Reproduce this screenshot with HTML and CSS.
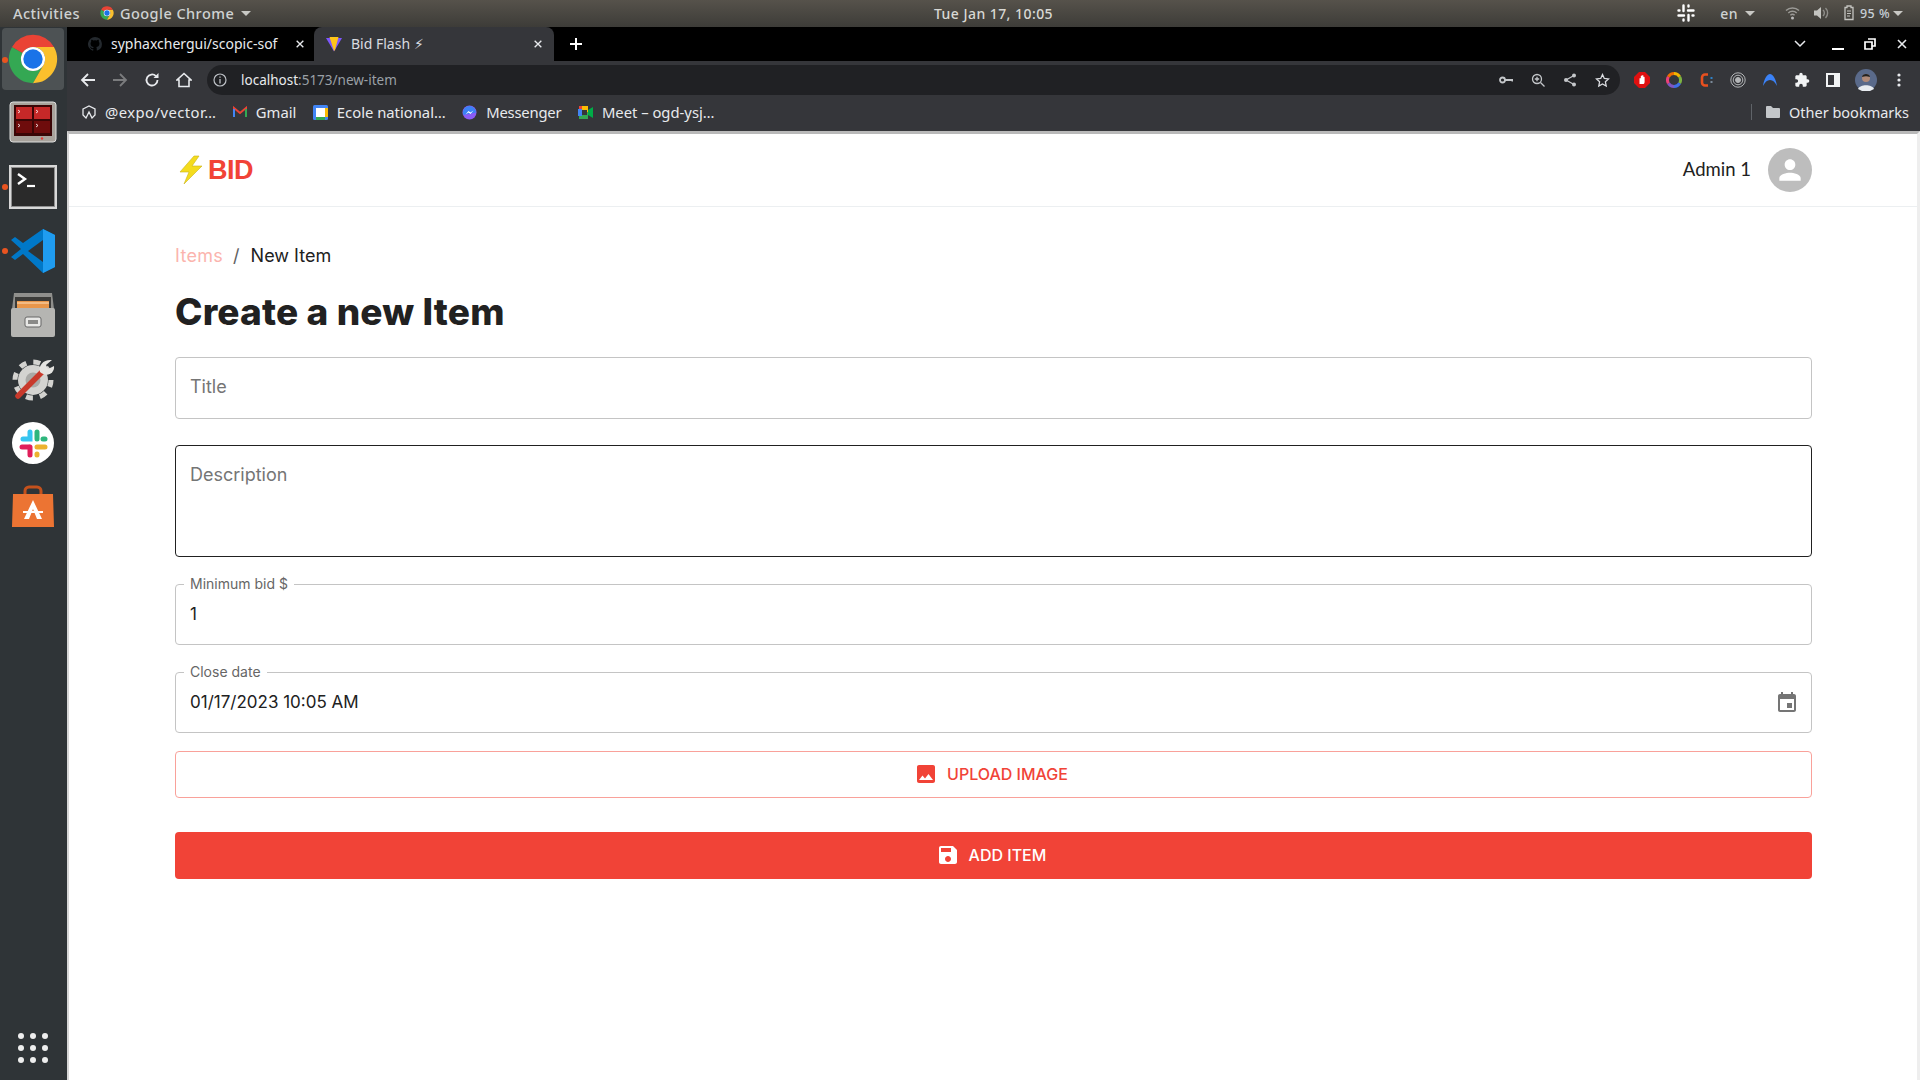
FILE: index.html
```html
<!DOCTYPE html>
<html>
<head>
  <title>Bid Flash</title>
  <meta charset="UTF-8">
  <link rel="stylesheet" href="styles.css">
</head>
<body>
  <svg class="defs" width="0" height="0">
    <symbol id="chrome" viewBox="0 0 48 48">
      <path fill="#34a853" d="M6.68 14A20 20 0 0 0 24 44l8.66-15A10 10 0 0 1 15.34 19z"/>
      <path fill="#fbc02d" d="M41.32 14A20 20 0 0 1 24 44l8.66-15A10 10 0 0 0 24 14z"/>
      <path fill="#ea4335" d="M24 4a20 20 0 0 1 17.32 10H24a10 10 0 0 0-8.66 5L6.68 14A20 20 0 0 1 24 4z"/>
      <circle cx="24" cy="24" r="10" fill="#fff"/>
      <circle cx="24" cy="24" r="8" fill="#1a73e8"/>
    </symbol>
    <symbol id="close" viewBox="0 0 12 12">
      <path d="M2 2l8 8M10 2l-8 8" stroke="currentColor" stroke-width="1.6" fill="none"/>
    </symbol>
  </svg>

  <!-- gnome top bar -->
  <div class="topbar">
    <div class="topbar-left">
      <span class="activities">Activities</span>
      <svg class="app-icon" width="16" height="16"><use href="#chrome"/></svg>
      <span class="appname">Google Chrome</span>
      <span class="caret"></span>
    </div>
    <div class="clock">Tue Jan 17, 10:05</div>
    <div class="topbar-right">
      <svg width="20" height="20" viewBox="0 0 20 20" class="tray-slack" fill="none" stroke="#fff" stroke-width="2.4" stroke-linecap="round"><path d="M7.500 2.500v5.500M12.500 12v5.500M2.500 12.500H8M12 7.500h5.500M12.500 2.500v1M7.500 16.500v1M2.500 7.500h1M16.500 12.500h1"/></svg>
      <span class="lang">en</span><span class="caret"></span>
      <svg class="tray-wifi" width="15" height="14" viewBox="0 0 15 14"><path d="M1 4.500a9.500 9.500 0 0 1 13 0M3.300 7a6.200 6.200 0 0 1 8.400 0M5.400 9.300a3 3 0 0 1 4.200 0" stroke="#9b9a96" stroke-width="1.500" fill="none"/><circle cx="7.500" cy="12" r="1.500" fill="#bbb"/></svg>
      <svg class="tray-vol" width="16" height="14" viewBox="0 0 16 14"><path d="M1 4.500h3L8 1v12L4 9.500H1z" fill="#c4c4c0"/><path d="M10 4a4 4 0 0 1 0 6M12.500 2a7 7 0 0 1 0 10" stroke="#8f8e8a" stroke-width="1.400" fill="none"/></svg>
      <svg class="tray-batt" width="16" height="16" viewBox="0 0 16 16"><path d="M3 2.500h2V1h4v1.500h2v12H3z" fill="none" stroke="#c4c4c0" stroke-width="1.300"/><path d="M5 6h4M5 8.500h4M5 11h3" stroke="#c4c4c0" stroke-width="1.200"/></svg>
      <span class="batt">95 %</span><span class="caret caret-batt"></span>
    </div>
  </div>

  <div class="desktop">
    <!-- dock -->
    <nav class="dock">
      <div class="dock-item active">
        <span class="dot"></span>
        <svg width="58" height="58"><use href="#chrome"/></svg>
      </div>
      <div class="dock-item">
        <svg width="48" height="44" viewBox="0 0 48 44">
          <rect x="1" y="1" width="46" height="40" rx="3" fill="#a8a39c" stroke="#ddd"/>
          <rect x="5" y="4" width="38" height="31" fill="#3a0606"/>
          <rect x="7" y="6" width="16" height="12" fill="#c62828"/><rect x="25" y="6" width="16" height="12" fill="#c62828"/>
          <rect x="7" y="20" width="16" height="12" fill="#6e0c0c"/><rect x="25" y="20" width="16" height="12" fill="#6e0c0c"/>
          <path d="M9 9l2 1.500-2 1.500M27 9l2 1.500-2 1.500M9 23l2 1.500-2 1.500M27 23l2 1.500-2 1.500" stroke="#fff" fill="none" stroke-width=".8"/>
          <circle cx="33" cy="37.500" r="1.200" fill="#e53935"/>
        </svg>
      </div>
      <div class="dock-item">
        <span class="dot"></span>
        <svg width="48" height="44" viewBox="0 0 48 44">
          <rect x="0" y="0" width="48" height="44" fill="#d8d8d8"/>
          <rect x="2" y="2" width="44" height="40" fill="#8f8f8f"/>
          <rect x="3" y="3" width="42" height="38" fill="#2a2a2a"/>
          <path d="M9 9l7 5-7 5" stroke="#fff" stroke-width="2.400" fill="none"/>
          <path d="M18 21h8" stroke="#fff" stroke-width="2.200"/>
        </svg>
      </div>
      <div class="dock-item">
        <span class="dot"></span>
        <svg width="46" height="46" viewBox="0 0 46 46">
          <path d="M33 1l12 6v32l-12 6-20-19-8 6-4-3 10-8L1 12l4-3 8 6z" fill="#0078c8"/>
          <path d="M33 1l12 6v32l-12 6z" fill="#1f9cf0"/>
          <path d="M33 12L18 23l15 11z" fill="#2f3437"/>
        </svg>
      </div>
      <div class="dock-item">
        <svg width="46" height="46" viewBox="0 0 46 46">
          <path d="M4 1h38l2 16H2z" fill="#8f8f8c"/>
          <rect x="5" y="5" width="36" height="12" fill="#3b3b39"/>
          <rect x="7" y="9" width="32" height="8" fill="#e8964a"/>
          <path d="M7 11h32" stroke="#fbe0bf"/>
          <rect x="1" y="16" width="44" height="29" rx="2" fill="#b5b5b2"/>
          <rect x="15" y="25" width="16" height="10" rx="2" fill="#e8e8e6" stroke="#666"/>
          <rect x="18" y="28" width="10" height="4" fill="#8a8a88"/>
        </svg>
      </div>
      <div class="dock-item">
        <svg width="48" height="48" viewBox="-2 0 48 48">
          <circle cx="22" cy="25" r="15" fill="#d3d3d0"/>
          <circle cx="22" cy="25" r="18" fill="none" stroke="#d3d3d0" stroke-width="5" stroke-dasharray="7 7.100"/>
          <circle cx="22" cy="25" r="7.500" fill="#a9a9a6"/>
          <path d="M7 41L31 17" stroke="#c8392b" stroke-width="5.500" stroke-linecap="round"/>
          <path d="M29 17c-2-7 4-13 12-12l-6 5 2 4 6-3c1 7-7 12-14 6z" fill="#e4e4e1"/>
        </svg>
      </div>
      <div class="dock-item">
        <svg width="42" height="42" viewBox="0 0 42 42">
          <circle cx="21" cy="21" r="21" fill="#fff"/>
          <path d="M18 10v7h-7" stroke="#36c5f0" stroke-width="5" stroke-linecap="round" fill="none"/>
          <path d="M25 10v7" stroke="#2eb67d" stroke-width="5" stroke-linecap="round"/>
          <path d="M33 17h-2" stroke="#2eb67d" stroke-width="5" stroke-linecap="round"/>
          <path d="M10 25h7" stroke="#e01e5a" stroke-width="5" stroke-linecap="round"/>
          <path d="M18 25v8" stroke="#e01e5a" stroke-width="5" stroke-linecap="round"/>
          <path d="M25 25h8M25 32v1" stroke="#ecb22e" stroke-width="5" stroke-linecap="round"/>
        </svg>
      </div>
      <div class="dock-item">
        <svg width="44" height="44" viewBox="0 0 44 44">
          <path d="M14 10V6a4 4 0 0 1 4-4h8a4 4 0 0 1 4 4v4" stroke="#c4511c" stroke-width="3" fill="none"/>
          <path d="M2 9h40l1 33H1z" fill="#ec7433"/>
          <path d="M22 15l-9 19h5l4-10 4 10h5z" fill="#fff"/>
          <path d="M12 27h20" stroke="#fff" stroke-width="2"/>
        </svg>
      </div>
      <div class="dock-apps">
        <span></span><span></span><span></span>
        <span></span><span></span><span></span>
        <span></span><span></span><span></span>
      </div>
    </nav>

    <div class="browser">
      <!-- tabs -->
      <div class="tabstrip">
        <div class="tab">
          <svg class="favicon" width="14" height="14" viewBox="0 0 16 16"><path fill="#24292e" d="M8 0a8 8 0 0 0-2.500 15.600c.4.100.5-.2.500-.4v-1.400c-2.200.5-2.700-1-2.700-1-.4-.9-.9-1.200-.9-1.200-.7-.5.100-.5.100-.5.800.1 1.200.8 1.200.8.700 1.200 1.900.9 2.300.7.100-.5.300-.9.500-1.100-1.800-.2-3.600-.9-3.600-4 0-.9.300-1.600.8-2.100-.1-.2-.4-1 .1-2.100 0 0 .7-.2 2.200.8a7.600 7.600 0 0 1 4 0c1.500-1 2.200-.8 2.200-.8.400 1.100.2 1.900.1 2.100.5.600.8 1.300.8 2.100 0 3.100-1.900 3.700-3.700 3.900.3.300.6.800.6 1.500v2.200c0 .2.100.5.600.4A8 8 0 0 0 8 0z"/></svg>
          <span class="tab-title">syphaxchergui/scopic-sof</span>
          <svg class="tab-close" width="10" height="10"><use href="#close"/></svg>
        </div>
        <div class="tab tab-active">
          <svg class="favicon" width="16" height="16" viewBox="0 0 16 16"><path d="M0 2l8 13.500L16 2z" fill="#7e57ff"/><path d="M3.500 1h9L9 14 8 15z" fill="#ffc517"/></svg>
          <span class="tab-title">Bid Flash ⚡&#xFE0E;</span>
          <svg class="tab-close" width="10" height="10"><use href="#close"/></svg>
        </div>
        <svg class="tab-new" width="14" height="14" viewBox="0 0 14 14"><path d="M7 1v12M1 7h12" stroke="#fff" stroke-width="2"/></svg>
        <div class="win-controls">
          <svg width="12" height="8" viewBox="0 0 12 8"><path d="M1 1l5 5 5-5" stroke="#e8eaed" stroke-width="1.500" fill="none"/></svg>
          <span class="win-min"></span>
          <svg width="12" height="12" viewBox="0 0 12 12"><path d="M4 1h7v7H8M1 4h7v7H1z" stroke="#fff" stroke-width="1.700" fill="none"/></svg>
          <svg width="12" height="12"><use href="#close"/></svg>
        </div>
      </div>

      <!-- toolbar -->
      <div class="toolbar">
        <div class="nav-btns">
          <svg width="16" height="16" viewBox="0 0 16 16"><path d="M15 8H2M8 2L2 8l6 6" stroke="#e8eaed" stroke-width="1.800" fill="none"/></svg>
          <svg width="16" height="16" viewBox="0 0 16 16"><path d="M1 8h13M8 2l6 6-6 6" stroke="#7b7c7e" stroke-width="1.800" fill="none"/></svg>
          <svg width="16" height="16" viewBox="0 0 16 16"><path d="M13.500 8a5.500 5.500 0 1 1-1.600-3.900" stroke="#e8eaed" stroke-width="1.800" fill="none"/><path d="M14.500 1v5h-5z" fill="#e8eaed"/></svg>
          <svg width="16" height="16" viewBox="0 0 16 16"><path d="M8 1.500L1 8h2v6.500h10V8h2z" stroke="#e8eaed" stroke-width="1.600" fill="none"/></svg>
        </div>
        <div class="omnibox">
          <svg class="omni-info" width="14" height="14" viewBox="0 0 14 14"><circle cx="7" cy="7" r="6" stroke="#bdc1c6" stroke-width="1.200" fill="none"/><path d="M7 6v4.500M7 3.500v1.300" stroke="#bdc1c6" stroke-width="1.300"/></svg>
          <span class="url"><span class="url-host">localhost</span>:5173/new-item</span>
          <div class="omni-actions">
            <svg width="14" height="8" viewBox="0 0 14 8"><circle cx="3.500" cy="4" r="2.500" stroke="#c4c7ca" stroke-width="1.800" fill="none"/><path d="M6 3h8v2.500h-1.500V5H6z" fill="#c4c7ca"/></svg>
            <svg width="14" height="14" viewBox="0 0 14 14"><circle cx="6" cy="6" r="4.500" stroke="#c4c7ca" stroke-width="1.300" fill="none"/><path d="M9.500 9.500L13.500 13.500M6 3.800v4.400M3.800 6h4.400" stroke="#c4c7ca" stroke-width="1.300"/></svg>
            <svg width="14" height="14" viewBox="0 0 14 14"><path d="M11 2.500L3 7l8 4.500" stroke="#c4c7ca" stroke-width="1.300" fill="none"/><circle cx="11" cy="2.500" r="2" fill="#c4c7ca"/><circle cx="3" cy="7" r="2" fill="#c4c7ca"/><circle cx="11" cy="11.500" r="2" fill="#c4c7ca"/></svg>
            <svg width="15" height="15" viewBox="0 0 15 15"><path d="M7.500 1.500l1.800 3.900 4.200.5-3.100 2.900.8 4.200-3.700-2.100-3.700 2.100.8-4.200L1.500 5.900l4.200-.5z" stroke="#dadce0" stroke-width="1.300" fill="none"/></svg>
          </div>
        </div>
        <div class="ext-icons">
          <svg width="16" height="16" viewBox="0 0 16 16"><path d="M5 0h6l5 5v6l-5 5H5l-5-5V5z" fill="#e01010"/><path d="M5.500 12V6.500a.7.700 0 0 1 1.300 0V4a.7.700 0 0 1 1.300 0v-.5a.7.700 0 0 1 1.300 0V5a.7.700 0 0 1 1.200.300V10a2.500 2.500 0 0 1-1 2z" fill="#fff"/></svg>
          <svg width="16" height="16" viewBox="0 0 16 16" fill="none" stroke-width="3"><path d="M8 1.500a6.500 6.500 0 0 1 5.600 3.200" stroke="#f4b400"/><path d="M13.600 4.700a6.500 6.500 0 0 1 0 6.600" stroke="#7cb342"/><path d="M13.600 11.300A6.500 6.500 0 0 1 8 14.500" stroke="#3f6fe8"/><path d="M8 14.500a6.500 6.500 0 0 1-5.600-3.200" stroke="#7e57c2"/><path d="M2.400 11.300a6.500 6.500 0 0 1 0-6.600" stroke="#ec407a"/><path d="M2.400 4.700A6.500 6.500 0 0 1 8 1.500" stroke="#ef6c00"/></svg>
          <svg width="16" height="16" viewBox="0 0 16 16"><path d="M10 2.500H7a3 3 0 0 0-3 3v5a3 3 0 0 0 3 3h3" stroke="#e8501f" stroke-width="2.600" fill="none"/><rect x="12.500" y="5" width="2" height="2" fill="#2f81c7"/><rect x="12.500" y="9" width="2" height="2" fill="#7b8a99"/></svg>
          <svg width="16" height="16" viewBox="0 0 16 16" fill="none" stroke="#b4b6b8"><circle cx="8" cy="8" r="7.200"/><circle cx="8" cy="8" r="4.800"/><circle cx="8" cy="8" r="2.500" fill="#b4b6b8"/></svg>
          <svg width="16" height="16" viewBox="0 0 16 16"><path d="M1 14C2 7 5 2 8 2s6 5 7 12c-2-4-4-6-7-6s-5 2-7 6z" fill="#3b82f6"/></svg>
          <svg width="16" height="16" viewBox="0 0 24 24"><path fill="#f1f3f4" d="M20.500 11H19V7c0-1.100-.9-2-2-2h-4V3.500a2.500 2.500 0 0 0-5 0V5H4c-1.100 0-2 .9-2 2v3.800h1.500a2.700 2.700 0 0 1 0 5.400H2V20c0 1.100.9 2 2 2h3.800v-1.500a2.700 2.700 0 0 1 5.400 0V22H17c1.100 0 2-.9 2-2v-4h1.500a2.500 2.500 0 0 0 0-5z"/></svg>
          <svg width="14" height="14" viewBox="0 0 14 14"><path d="M0 0h14v14H0z" fill="#f1f3f4"/><path d="M2 2h6v10H2z" fill="#35363a"/></svg>
          <svg class="avatar-small" width="22" height="22" viewBox="0 0 22 22"><circle cx="11" cy="11" r="11" fill="#5a6a8a"/><path d="M3 20c2-5 14-5 16 0l-4 2H7z" fill="#e8ecf0"/><circle cx="11" cy="9" r="4" fill="#b08a78"/><path d="M7 8c0-4 8-4 8 0-3-1-5-1-8 0z" fill="#222"/></svg>
          <svg width="4" height="14" viewBox="0 0 4 14"><circle cx="2" cy="2" r="1.600" fill="#e8eaed"/><circle cx="2" cy="7" r="1.600" fill="#e8eaed"/><circle cx="2" cy="12" r="1.600" fill="#e8eaed"/></svg>
        </div>
      </div>

      <!-- bookmarks -->
      <div class="bookmarks">
        <div class="bm bm-expo">
          <svg width="14" height="14" viewBox="0 0 14 14"><path d="M1 4l6-3 6 3v6l-3 3-3-6-3 6-3-3z" fill="none" stroke="#e8eaed" stroke-width="1.300"/></svg>
          <span>@expo/vector…</span>
        </div>
        <div class="bm">
          <svg width="14" height="12" viewBox="0 0 14 12"><path d="M1 11V2l6 5 6-5v9" fill="none" stroke="#ea4335" stroke-width="2"/><path d="M1 11V3" stroke="#4285f4" stroke-width="2"/><path d="M13 11V3" stroke="#34a853" stroke-width="2"/></svg>
          <span>Gmail</span>
        </div>
        <div class="bm">
          <svg width="15" height="15" viewBox="0 0 15 15"><rect width="15" height="15" rx="1.500" fill="#4285f4"/><rect x="3" y="3" width="9" height="9" fill="#fff"/><path d="M12 3h3v9h-3z" fill="#fbbc04"/><path d="M3 12h9v3H3z" fill="#34a853"/></svg>
          <span>Ecole national…</span>
        </div>
        <div class="bm bm-msg">
          <svg width="15" height="15" viewBox="0 0 15 15"><circle cx="7.500" cy="7.500" r="7" fill="#8b5cf6"/><path d="M7.500 1a6.500 6.500 0 0 1 6.500 6.500L1.500 10A6.500 6.500 0 0 1 7.500 1z" fill="#3b82f6"/><path d="M3.500 9.500L6.500 6l2 1.500L11.500 5.500 8.500 9 6.500 7.500z" fill="#fff"/></svg>
          <span>Messenger</span>
        </div>
        <div class="bm">
          <svg width="15" height="13" viewBox="0 0 15 13"><rect x="1" y="0" width="9" height="6.500" fill="#fbbc04"/><rect x="1" y="6.500" width="9" height="6.500" fill="#34a853"/><rect x="0" y="3" width="4" height="7" fill="#4285f4"/><path d="M10 4l5-3v11l-5-3z" fill="#00ac47"/><rect x="4" y="4" width="5" height="5" fill="#35363a"/><rect x="1" y="0" width="3" height="3" fill="#ea4335"/></svg>
          <span>Meet – ogd-ysj…</span>
        </div>
        <div class="bm-other">
          <svg width="14" height="12" viewBox="0 0 14 12"><path d="M0 1a1 1 0 0 1 1-1h4l2 2h6a1 1 0 0 1 1 1v8a1 1 0 0 1-1 1H1a1 1 0 0 1-1-1z" fill="#c4c7ca"/></svg>
          <span>Other bookmarks</span>
        </div>
      </div>

      <!-- page -->
      <div class="page">
        <header class="app-header">
          <div class="logo"><span class="bolt">
            <svg width="24" height="30" viewBox="0 0 24 30"><path d="M15 1L1 17h9L5 29 23 11h-10l7-10z" fill="#f4dc1e" stroke="#c9b41a" stroke-width=".6"/></svg>
          </span><span class="logo-text">BID</span></div>
          <div class="user">
            <span class="user-name">Admin 1</span>
            <div class="avatar">
              <svg width="32" height="32" viewBox="0 0 24 24"><path fill="#fff" d="M12 12c2.210 0 4-1.790 4-4s-1.790-4-4-4-4 1.790-4 4 1.790 4 4 4zm0 2c-2.670 0-8 1.340-8 4v2h16v-2c0-2.660-5.330-4-8-4z"/></svg>
            </div>
          </div>
        </header>

        <main class="content">
          <div class="crumbs">
            <a class="crumb-link">Items</a>
            <span class="crumb-sep">/</span>
            <span class="crumb-now">New Item</span>
          </div>
          <h1 class="title">Create a new Item</h1>

          <form class="form">
            <div class="field field-title"><span class="placeholder">Title</span></div>
            <div class="field field-desc"><span class="placeholder">Description</span></div>
            <div class="field field-bid">
              <label class="legend">Minimum bid $</label>
              <span class="value">1</span>
            </div>
            <div class="field field-date">
              <label class="legend">Close date</label>
              <span class="value">01/17/2023 10:05 AM</span>
              <svg class="cal" width="24" height="24" viewBox="0 0 24 24"><path fill="#757575" d="M17 12h-5v5h5v-5zM16 1v2H8V1H6v2H5c-1.110 0-1.990.9-1.990 2L3 19c0 1.100.89 2 2 2h14c1.100 0 2-.9 2-2V5c0-1.100-.9-2-2-2h-1V1h-2zm3 18H5V8h14v11z"/></svg>
            </div>
            <button type="button" class="btn btn-upload">
              <svg width="24" height="24" viewBox="0 0 24 24"><path fill="#f14337" d="M21 19V5c0-1.100-.9-2-2-2H5c-1.100 0-2 .9-2 2v14c0 1.100.9 2 2 2h14c1.100 0 2-.9 2-2zM8.500 13.500l2.500 3.010L14.500 12l4.500 6H5l3.500-4.500z"/></svg>
              Upload image
            </button>
            <button type="button" class="btn btn-add">
              <svg width="24" height="24" viewBox="0 0 24 24"><path fill="#fff" d="M17 3H5c-1.110 0-2 .9-2 2v14c0 1.100.89 2 2 2h14c1.100 0 2-.9 2-2V7l-4-4zm-5 16c-1.660 0-3-1.340-3-3s1.340-3 3-3 3 1.340 3 3-1.340 3-3 3zm3-10H5V5h10v4z"/></svg>
              Add item
            </button>
          </form>
        </main>
      </div>
    </div>
  </div>
</body>
</html>
```

FILE: styles.css
```css
*{box-sizing:border-box;}

html,body{height:100%;}

body{
    margin:0;
    height:1080px;
    overflow:hidden;
    display:flex;
    flex-direction:column;
    font-family:Inter,"Liberation Sans",sans-serif;
    background:#fff;
}

.defs{position:absolute;}

/* top bar */
.topbar{
    height:27px;
    flex:none;
    display:flex;
    align-items:center;
    justify-content:space-between;
    padding:0 17px 1px 13px;
    background:linear-gradient(#56524b,#3d3c38);
    color:#cfd2d2;
    font-family:"Noto Sans",sans-serif;
    font-size:14.500px;
    font-weight:500;
    letter-spacing:.45px;
    position:relative;
}

.topbar-left,.topbar-right{display:flex; align-items:center;}

.activities{margin-right:19px;}
.app-icon{margin-right:5px;}

.caret{
    width:0; height:0;
    margin-left:7px;
    border:5px solid transparent;
    border-top:5px solid #c8c8c4;
    border-bottom:0;
}

.caret-batt{margin-left:3px;}

.clock{position:absolute; left:934px; color:#d8d8d4; font-size:14px;}

.tray-slack{margin-right:24px;}
.lang{font-size:14px;}
.tray-wifi{margin-left:30px;}
.tray-vol{margin-left:13px;}
.tray-batt{margin-left:13px; margin-right:2px;}
.batt{font-size:12.500px; color:#c7cfd6;}

.desktop{flex:1; display:flex; min-height:0;}

/* dock */
.dock{
    width:67px;
    flex:none;
    background:#2f3437;
    display:flex;
    flex-direction:column;
    align-items:flex-start;
    padding:1px 0 0 2px;
    position:relative;
}

.dock-item{
    width:62px;
    height:64px;
    display:flex;
    align-items:center;
    justify-content:center;
    position:relative;
    border-radius:4px;
    flex:none;
}

.dock-item.active{background:#4d5254; height:62px; margin-bottom:1px;}

.dot{
    position:absolute;
    left:0; top:29px;
    width:6px; height:6px;
    border-radius:50%;
    background:#e95420;
}

.dock-apps{
    margin:auto 0 17px 16px;
    display:grid;
    grid-template-columns:repeat(3,6px);
    gap:6px;
}

.dock-apps span{
    width:6px; height:6px;
    border-radius:50%;
    background:#eee;
}

/* browser chrome */
.browser{flex:1; min-width:0; display:flex; flex-direction:column;}

.tabstrip{
    height:34px;
    flex:none;
    background:#000;
    display:flex;
    align-items:stretch;
    color:#e8eaed;
    font-family:"Noto Sans",sans-serif;
    font-size:14px;
}

.tab{
    width:240px;
    display:flex;
    align-items:center;
    padding:0 9px 0 20px;
}

.tab:first-child{width:247px; padding-left:21px; padding-right:9px;}

.tab-title{padding-bottom:1px;}

.tab-active{
    background:#35363a;
    border-radius:8px 8px 0 0;
    padding-left:12px;
    padding-right:11px;
    color:#dadce0;
}

.favicon{flex:none; margin-right:9px;}
.tab-title{flex:1; white-space:nowrap; overflow:hidden;}
.tab-close{flex:none; color:#e8eaed;}

.tab-new{align-self:center; margin-left:15px;}

.win-controls{
    margin-left:auto;
    display:flex;
    align-items:center;
    gap:20px;
    padding-right:12px;
}

.win-min{width:12px; height:2px; background:#fff; margin-top:10px; margin-left:6px;}

.toolbar{
    height:39px;
    flex:none;
    background:#35363a;
    display:flex;
    align-items:flex-start;
    padding-top:4px;
}

.nav-btns{
    width:140px;
    height:30px;
    flex:none;
    display:flex;
    align-items:center;
    gap:16px;
    padding-left:13px;
}

.omnibox{
    width:1413px;
    height:30px;
    flex:none;
    border-radius:15px;
    background:#202124;
    display:flex;
    align-items:center;
    padding:0 10px 0 6px;
    font-family:"Noto Sans",sans-serif;
    font-size:13.500px;
    color:#9aa0a6;
}

.omni-info{margin:0 14px 0 0;}
.url-host{color:#e8eaed;}

.omni-actions{
    margin-left:auto;
    display:flex;
    align-items:center;
    gap:18px;
}

.ext-icons{
    flex:1;
    height:30px;
    display:flex;
    align-items:center;
    gap:16px;
    padding-left:14px;
}

.avatar-small{margin:0 0 0 -1px;}
.ext-icons svg:last-child{margin-left:4px;}

.bookmarks{
    height:31px;
    flex:none;
    background:#35363a;
    display:flex;
    align-items:center;
    color:#e8eaed;
    font-family:"Noto Sans",sans-serif;
    font-size:14.800px;
    padding:0 0 7px 15px;
    gap:16.500px;
}

.bm{display:flex; align-items:center; gap:9px; white-space:nowrap;}
.bm-expo span{letter-spacing:.45px;}
.bm-msg span{letter-spacing:-.2px;}

.bm-other{
    margin-left:auto;
    height:16px;
    display:flex;
    align-items:center;
    gap:9px;
    padding:0 11px 0 14px;
    border-left:1px solid #5f6368;
    font-size:14.500px;
}

/* the app */
.page{
    flex:1;
    min-height:0;
    background:#fff;
    border-top:3px solid #b9b9b9;
    border-left:2px solid #d6d6d6;
    border-right:3px solid #eee;
}

.app-header{
    height:73px;
    display:flex;
    align-items:center;
    justify-content:space-between;
    padding:0 105px 0 106px;
    border-bottom:1px solid #eceff1;
}

.logo{display:flex; align-items:center;}
.bolt{display:flex; margin-right:5px; margin-left:4px;}

.logo-text{
    font-family:"Liberation Sans",sans-serif;
    font-weight:700;
    font-size:27px;
    letter-spacing:-.5px;
    color:#f14337;
}

.user{display:flex; align-items:center; gap:17px;}

.user-name{font-size:18.500px; color:#212121; font-family:Lato,sans-serif; margin-top:-2px;}

.avatar{
    width:44px; height:44px;
    border-radius:50%;
    background:#bdbdbd;
    display:flex;
    align-items:center;
    justify-content:center;
}

.content{padding:0 105px 0 106px;}

.crumbs{
    display:flex;
    align-items:center;
    height:28px;
    margin-top:34px;
    font-size:18px;
    color:#212121;
}

.crumb-link{color:#fbb4ae; letter-spacing:.3px;}
.crumb-sep{margin:0 11px 0 10px; color:#616161;}

.title{
    margin:16px 0 0;
    height:54px;
    font-size:37px;
    line-height:54px;
    font-weight:800;
    letter-spacing:.15px;
    color:#212121;
}

.form{margin-top:18px; display:flex; flex-direction:column;}

.field{
    position:relative;
    border:1px solid #c4c4c4;
    border-radius:4px;
    height:61px;
    padding:0 14px;
    display:flex;
    align-items:center;
    font-size:18px;
    color:#212121;
}

.placeholder{color:#757575;}

.field-title{height:62px; margin-bottom:26px;}
.field-title .placeholder{margin-top:-3px;}

.field-desc{
    height:112px;
    margin-bottom:27px;
    border-color:#212121;
    align-items:flex-start;
    padding-top:18px;
}

.field-bid{margin-bottom:27px;}

.legend{
    position:absolute;
    left:8px; top:-9px;
    padding:0 6px;
    background:#fff;
    font-size:14px;
    line-height:16px;
    color:#666;
}

.value{margin-top:-2px; font-size:17px;}

.cal{margin-left:auto; margin-right:-2px;}

.btn{
    height:47px;
    border-radius:4px;
    display:flex;
    align-items:center;
    justify-content:center;
    gap:9px;
    padding:0 5px 2px 0;
    font-family:inherit;
    font-size:16px;
    font-weight:500;
    text-transform:uppercase;
    cursor:pointer;
}

.btn-upload{
    margin-top:18px;
    background:#fff;
    color:#f14337;
    border:1px solid #f9a19a;
}

.btn-add{
    margin-top:34px;
    background:#f14337;
    color:#fff;
    border:0;
}
```
